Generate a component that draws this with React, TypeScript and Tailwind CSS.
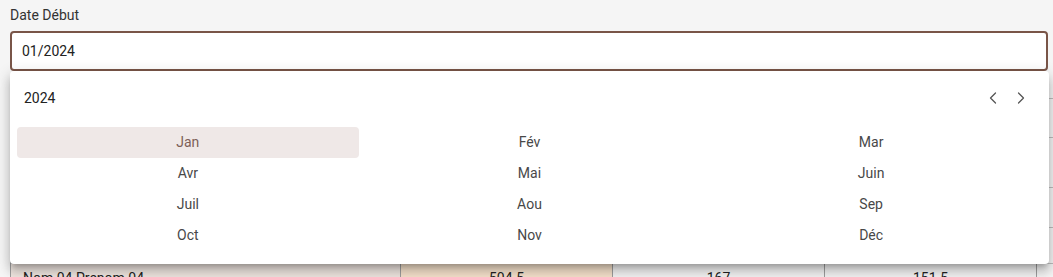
import React from "react";
import { ChevronLeft, ChevronRight } from "lucide-react";

const months = [
  "Jan", "Fév", "Mar",
  "Avr", "Mai", "Juin",
  "Juil", "Aou", "Sep",
  "Oct", "Nov", "Déc",
];

const rows = [
  { h: "h-[15px]", cells: ["", "", "", "", ""] },
  { h: "h-[39px]", cells: ["", "", "", "", ""] },
  { h: "h-[50px]", cells: ["", "", "", "", ""] },
  { h: "h-[40px]", cells: ["", "", "", "", ""] },
  { h: "h-[36px]", cells: ["", "", "", "", ""] },
  { h: "h-[40px]", cells: ["Nom 04 Prenom 04", "504.5", "167", "151.5", ""] },
];

export default function App() {
  return (
    <div className="min-h-[277px] bg-[#f5f5f5] font-['Roboto',sans-serif] text-[14px] overflow-hidden">
      <div className="relative pl-[10px] pt-[5px]">
        <div className="leading-[20px] text-[#333333] mb-[6px]">Date Début</div>
        <div className="w-[1038px] h-[40px] border-2 border-[#795548] rounded-[4px] bg-white flex items-center px-[10px] text-[#222222]">
          01/2024
        </div>

        {/* table behind the picker */}
        <div className="mt-[13px] w-[1100px] border-l border-[#9e9e9e]">
          {rows.map((r, i) => (
            <div key={i} className={`flex border-b border-[#bdbdbd] ${r.h}`}>
              <div className="w-[389px] bg-[#efe6e0] px-[12px] pt-[4px] leading-[20px] text-[#222]">{r.cells[0]}</div>
              <div className="w-[212px] bg-[#f6e2cc] border-l border-[#9e9e9e] text-center pt-[4px] leading-[20px] text-[#222]">{r.cells[1]}</div>
              <div className="w-[212px] bg-[#f4f4f4] border-l border-[#9e9e9e] text-center pt-[4px] leading-[20px] text-[#222]">{r.cells[2]}</div>
              <div className="w-[212px] bg-[#f4f4f4] border-l border-[#9e9e9e] text-center pt-[4px] leading-[20px] text-[#222]">{r.cells[3]}</div>
              <div className="flex-1 bg-[#f4f4f4] border-l border-[#9e9e9e]">{r.cells[4]}</div>
            </div>
          ))}
        </div>

        {/* month picker popup */}
        <div className="absolute left-[10px] top-[71px] w-[1039px] bg-white rounded-[4px] pb-[13px] shadow-[0px_5px_5px_-3px_rgba(0,0,0,0.2),0px_8px_10px_1px_rgba(0,0,0,0.14),0px_3px_14px_2px_rgba(0,0,0,0.12)]">
          <div className="h-[54px] flex items-center justify-between pl-[14px] pr-[14px]">
            <span className="text-[#222222]">2024</span>
            <div className="flex">
              <button className="w-[28px] h-[28px] flex items-center justify-center text-[#555]">
                <ChevronLeft size={20} strokeWidth={1.5} />
              </button>
              <button className="w-[28px] h-[28px] flex items-center justify-center text-[#555]">
                <ChevronRight size={20} strokeWidth={1.5} />
              </button>
            </div>
          </div>
          <div className="grid grid-cols-3 px-[7px] mt-[2px]">
            {months.map((m) => (
              <div
                key={m}
                className={
                  m === "Jan"
                    ? "h-[31px] flex items-center justify-center rounded-[4px] bg-[#efe8e7] text-[#7d5f57]"
                    : "h-[31px] flex items-center justify-center text-[#484848]"
                }
              >
                {m}
              </div>
            ))}
          </div>
        </div>
      </div>
    </div>
  );
}
